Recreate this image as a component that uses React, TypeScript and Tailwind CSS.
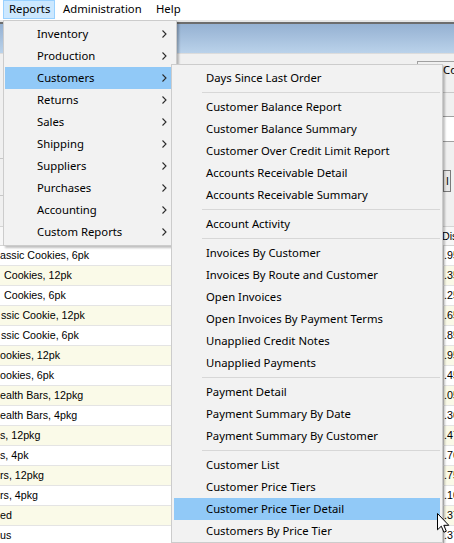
import React from "react";

const MAIN_ITEMS = [
  "Inventory",
  "Production",
  "Customers",
  "Returns",
  "Sales",
  "Shipping",
  "Suppliers",
  "Purchases",
  "Accounting",
  "Custom Reports",
];

// null = separator
const CUSTOMER_REPORTS: (string | null)[] = [
  "Days Since Last Order",
  null,
  "Customer Balance Report",
  "Customer Balance Summary",
  "Customer Over Credit Limit Report",
  "Accounts Receivable Detail",
  "Accounts Receivable Summary",
  null,
  "Account Activity",
  null,
  "Invoices By Customer",
  "Invoices By Route and Customer",
  "Open Invoices",
  "Open Invoices By Payment Terms",
  "Unapplied Credit Notes",
  "Unapplied Payments",
  null,
  "Payment Detail",
  "Payment Summary By Date",
  "Payment Summary By Customer",
  null,
  "Customer List",
  "Customer Price Tiers",
  "Customer Price Tier Detail",
  "Customers By Price Tier",
];

const ROWS = [
  { text: "assic Cookies, 6pk", pad: "pl-0", num: ".95" },
  { text: "Cookies, 12pk", pad: "pl-[4px]", num: ".35" },
  { text: "Cookies, 6pk", pad: "pl-[4px]", num: ".25" },
  { text: "ssic Cookie, 12pk", pad: "pl-[1px]", num: ".65" },
  { text: "ssic Cookie, 6pk", pad: "pl-[1px]", num: ".85" },
  { text: "ookies, 12pk", pad: "pl-0", num: ".95" },
  { text: "ookies, 6pk", pad: "pl-0", num: ".45" },
  { text: "ealth Bars, 12pkg", pad: "pl-0", num: ".05" },
  { text: "ealth Bars, 4pkg", pad: "pl-0", num: ".36" },
  { text: "s, 12pkg", pad: "pl-0", num: ".47" },
  { text: "s, 4pk", pad: "pl-0", num: ".76" },
  { text: "rs, 12pkg", pad: "pl-0", num: ".75" },
  { text: "rs, 4pkg", pad: "pl-0", num: ".10" },
  { text: "ed", pad: "pl-0", num: ".37" },
  { text: "us", pad: "pl-0", num: ".37" },
];

function Chevron() {
  return (
    <svg width="5" height="8" viewBox="0 0 5 8" className="text-[#2b2b2b]">
      <path d="M0.5 0.5 L4 4 L0.5 7.5" fill="none" stroke="currentColor" strokeWidth="1.1" />
    </svg>
  );
}

function Cursor() {
  return (
    <svg
      width="13"
      height="21"
      viewBox="0 0 13 21"
      className="absolute left-[437px] top-[513px]"
    >
      <path
        d="M0.5 0.5 V16.8 L4.3 13.2 L6.9 19.2 L9.3 18.2 L6.8 12.3 H11.8 Z"
        fill="white"
        stroke="black"
        strokeWidth="1"
        strokeLinejoin="round"
      />
    </svg>
  );
}

export default function App() {
  return (
    <div className="relative h-[543px] w-[454px] overflow-hidden bg-[#f0f0f0] font-['Noto_Sans',sans-serif] text-[11.3px] text-black">
      {/* Menu bar */}
      <div className="flex h-[20px] items-start bg-white pl-[3px]">
        <div className="flex h-[19px] w-[52px] items-center border border-[#99d1ff] bg-[#cce8ff] pl-[5px]">
          Reports
        </div>
        <div className="flex h-[19px] w-[94px] items-center pl-[8px]">Administration</div>
        <div className="flex h-[19px] items-center pl-[7px]">Help</div>
      </div>

      {/* Window chrome */}
      <div className="h-[2px] bg-[#e6e6e6]" />
      <div className="h-[2px] bg-[#6d6d6d]" />
      <div className="h-[29px] bg-gradient-to-b from-[#95b1d2] to-[#bad2ea]" />
      <div className="h-px bg-[#dcdcdc]" />

      {/* Form area */}
      <div className="flex h-[172px] bg-[#f0f0f0]">
        <div className="flex w-[160px] shrink-0 flex-col">
          <div className="h-[104px]" />
          <div className="h-px bg-[#c8c8c8]" />
          <div className="h-[36px]" />
          <div className="h-px bg-[#c8c8c8]" />
        </div>
        <div className="flex-1" />
        <div className="flex w-[37px] shrink-0 flex-col">
          <div className="mt-[7px] flex h-[17px] items-center overflow-hidden whitespace-nowrap border-t border-l border-[#a0a0a0] pl-[25px]">
            Co
          </div>
          <div className="mt-[14px] h-px bg-[#c8c8c8]" />
          <div className="mt-[23px] h-[26px] border-y border-[#a0a0a0] bg-white" />
          <div className="mt-[28px] ml-[26px] flex h-[22px] w-[8px] items-center border border-[#7a7a7a] bg-[#e8e8e8] pl-[2px] text-[11px]">
            l
          </div>
        </div>
      </div>

      {/* Grid */}
      <div className="font-['Liberation_Sans',Arial,sans-serif] text-[10.7px]">
        <div className="flex h-[20px] items-center border-y border-[#d5d5d5] bg-[#f7f7f7]">
          <div className="h-full w-[442px] shrink-0 border-r border-[#d5d5d5]" />
          <div className="whitespace-nowrap">Dis</div>
        </div>
        {ROWS.map((r, i) => (
          <div
            key={i}
            className={`flex h-[20px] items-center border-b border-[#e4e4e4] ${
              i % 2 === 1 ? "bg-[#fafae8]" : "bg-white"
            }`}
          >
            <div className={`h-full w-[444px] shrink-0 overflow-hidden whitespace-nowrap border-r border-[#d5d5d5] leading-[19px] ${r.pad}`}>
              {r.text}
            </div>
            <div className="whitespace-nowrap">{r.num}</div>
          </div>
        ))}
      </div>

      {/* Reports dropdown */}
      <div className="absolute left-[3px] top-[20px] w-[174px] border border-[#cccccc] bg-[#f2f2f2] py-[2px] shadow-[2px_2px_2px_rgba(0,0,0,0.25)]">
        {MAIN_ITEMS.map((label) => (
          <div
            key={label}
            className={`mx-px flex h-[22px] items-center pl-[32px] pr-[8px] ${
              label === "Customers" ? "bg-[#91c9f7]" : ""
            }`}
          >
            <span className="flex-1">{label}</span>
            <Chevron />
          </div>
        ))}
      </div>

      {/* Customers submenu */}
      <div className="absolute left-[171px] top-[64px] w-[272px] border border-[#cccccc] bg-[#f2f2f2] pt-[2px] shadow-[2px_2px_2px_rgba(0,0,0,0.25)]">
        {CUSTOMER_REPORTS.map((label, i) =>
          label === null ? (
            <div key={i} className="flex h-[7px] items-center pl-[30px] pr-[2px]">
              <div className="h-px flex-1 bg-[#d7d7d7]" />
            </div>
          ) : (
            <div
              key={i}
              className={`mx-[2px] flex h-[22px] items-center pl-[32px] ${
                label === "Customer Price Tier Detail" ? "bg-[#91c9f7]" : ""
              }`}
            >
              {label}
            </div>
          )
        )}
      </div>

      <Cursor />
    </div>
  );
}
